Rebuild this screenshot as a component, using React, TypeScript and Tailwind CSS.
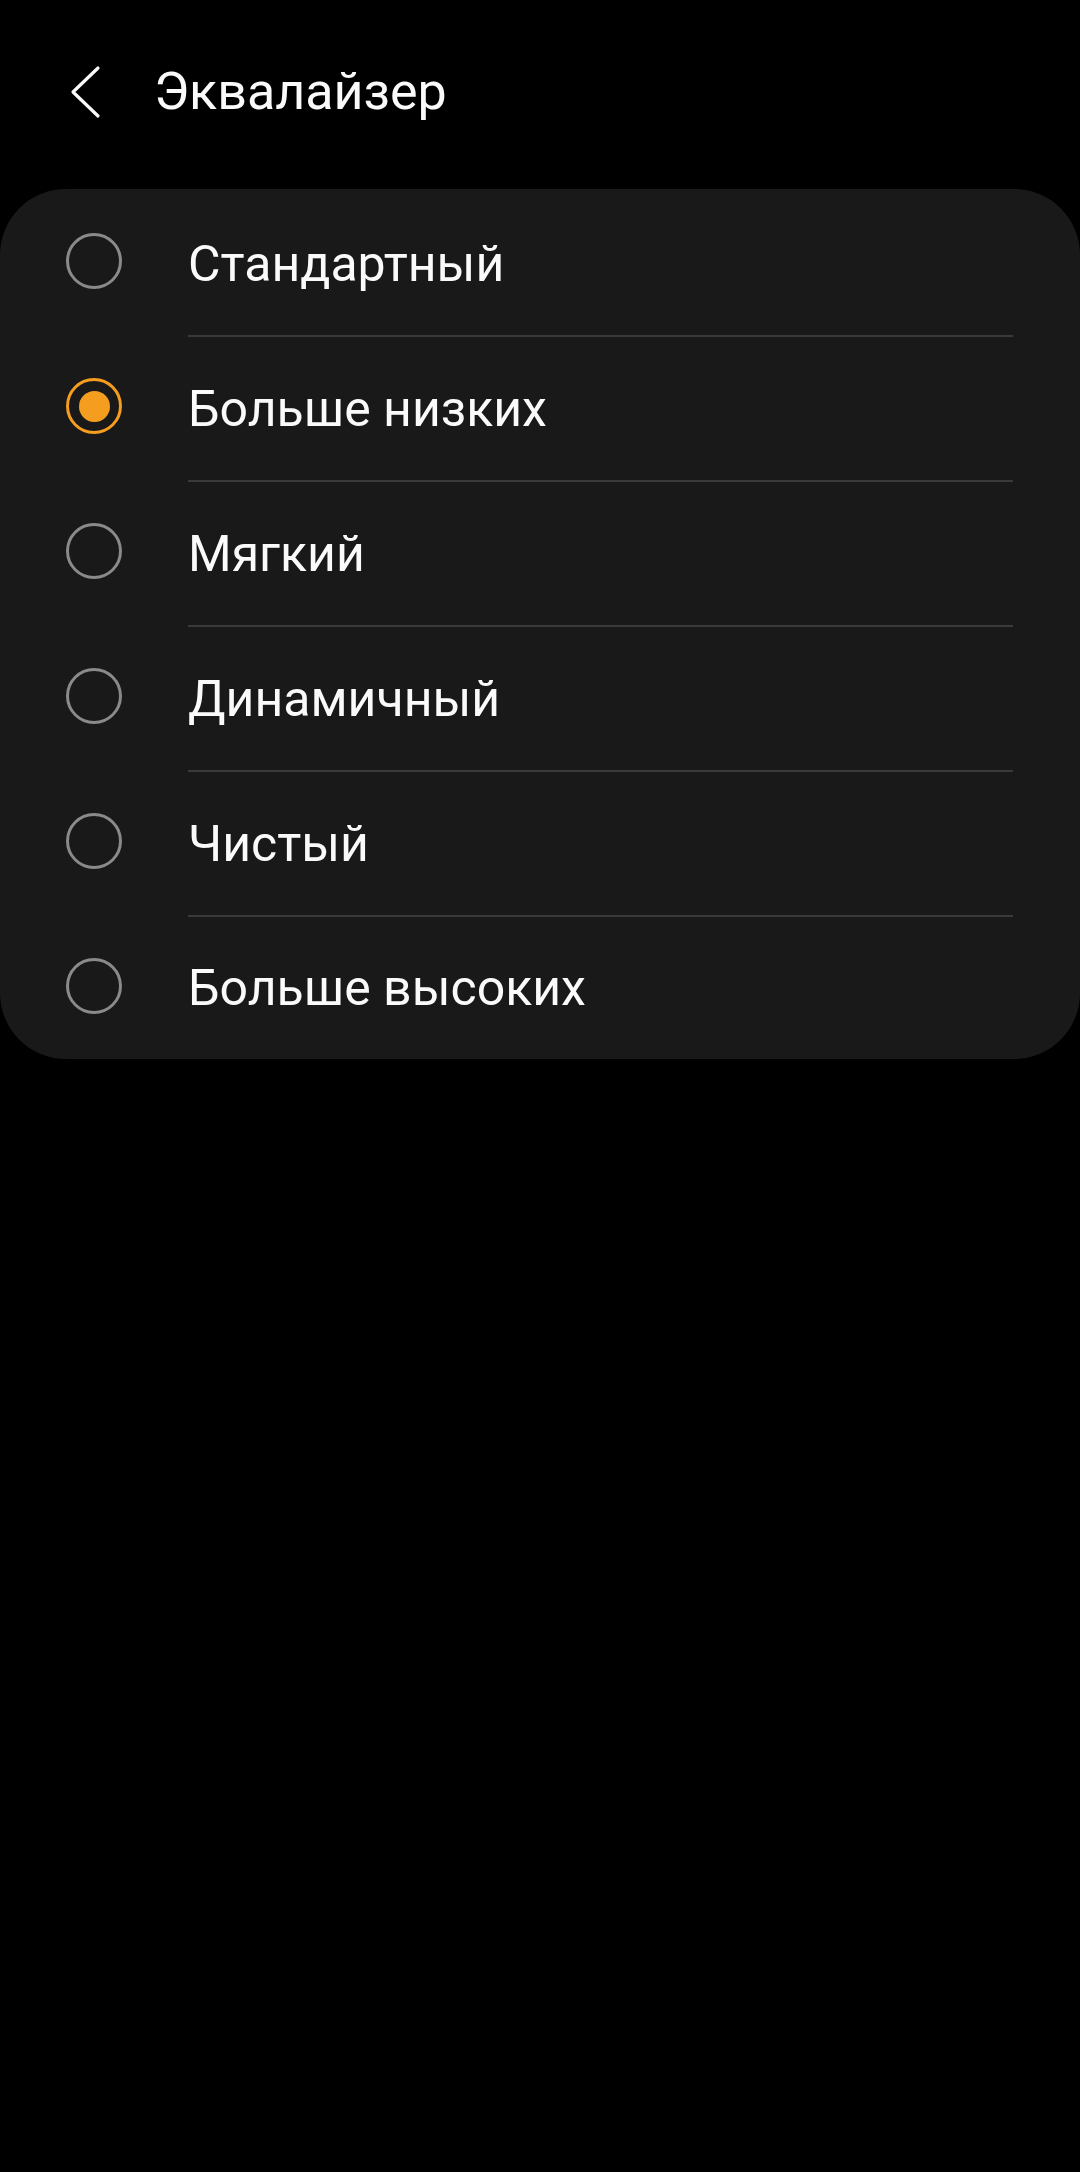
import React from "react";

const items = [
  "Стандартный",
  "Больше низких",
  "Мягкий",
  "Динамичный",
  "Чистый",
  "Больше высоких",
];

function Radio({ checked }: { checked: boolean }) {
  if (checked) {
    return (
      <div className="w-[56px] h-[56px] mb-[5px] rounded-full border-[3px] border-[#f59d1f] flex items-center justify-center shrink-0">
        <div className="w-[31px] h-[31px] rounded-full bg-[#f59d1f]" />
      </div>
    );
  }
  return <div className="w-[56px] h-[56px] mb-[5px] rounded-full border-[3px] border-[#8a8a8a] shrink-0" />;
}

export default function App() {
  const selected = 1;
  return (
    <div
      className="w-[1080px] h-[2172px] bg-black text-[#fafafa]"
      style={{ fontFamily: "Roboto, 'Noto Sans', sans-serif" }}
    >
      <div className="h-[189px] flex items-start">
        <div className="flex items-center h-[184px] pl-[70px]">
          <svg width="32" height="56" viewBox="0 0 32 56" className="mr-[52px]">
            <path d="M28 4 L3 28 L28 52" fill="none" stroke="#fafafa" strokeWidth="3.2" strokeLinecap="round" strokeLinejoin="round" />
          </svg>
          <span className="text-[52px] leading-none">Эквалайзер</span>
        </div>
      </div>
      <div className="bg-[#191919] rounded-[66px] overflow-hidden pt-[3px]">
        {items.map((label, i) => {
          const last = i === items.length - 1;
          return (
            <div key={label} className="flex flex-col">
              <div className={`${last ? "h-[142px]" : "h-[143px]"} flex items-center pl-[66px]`}>
                <Radio checked={i === selected} />
                <span className="ml-[66px] text-[50px] leading-none">{label}</span>
              </div>
              {!last && <div className="h-[2px] ml-[188px] mr-[67px] bg-[#3a3a3a]" />}
            </div>
          );
        })}
      </div>
    </div>
  );
}
